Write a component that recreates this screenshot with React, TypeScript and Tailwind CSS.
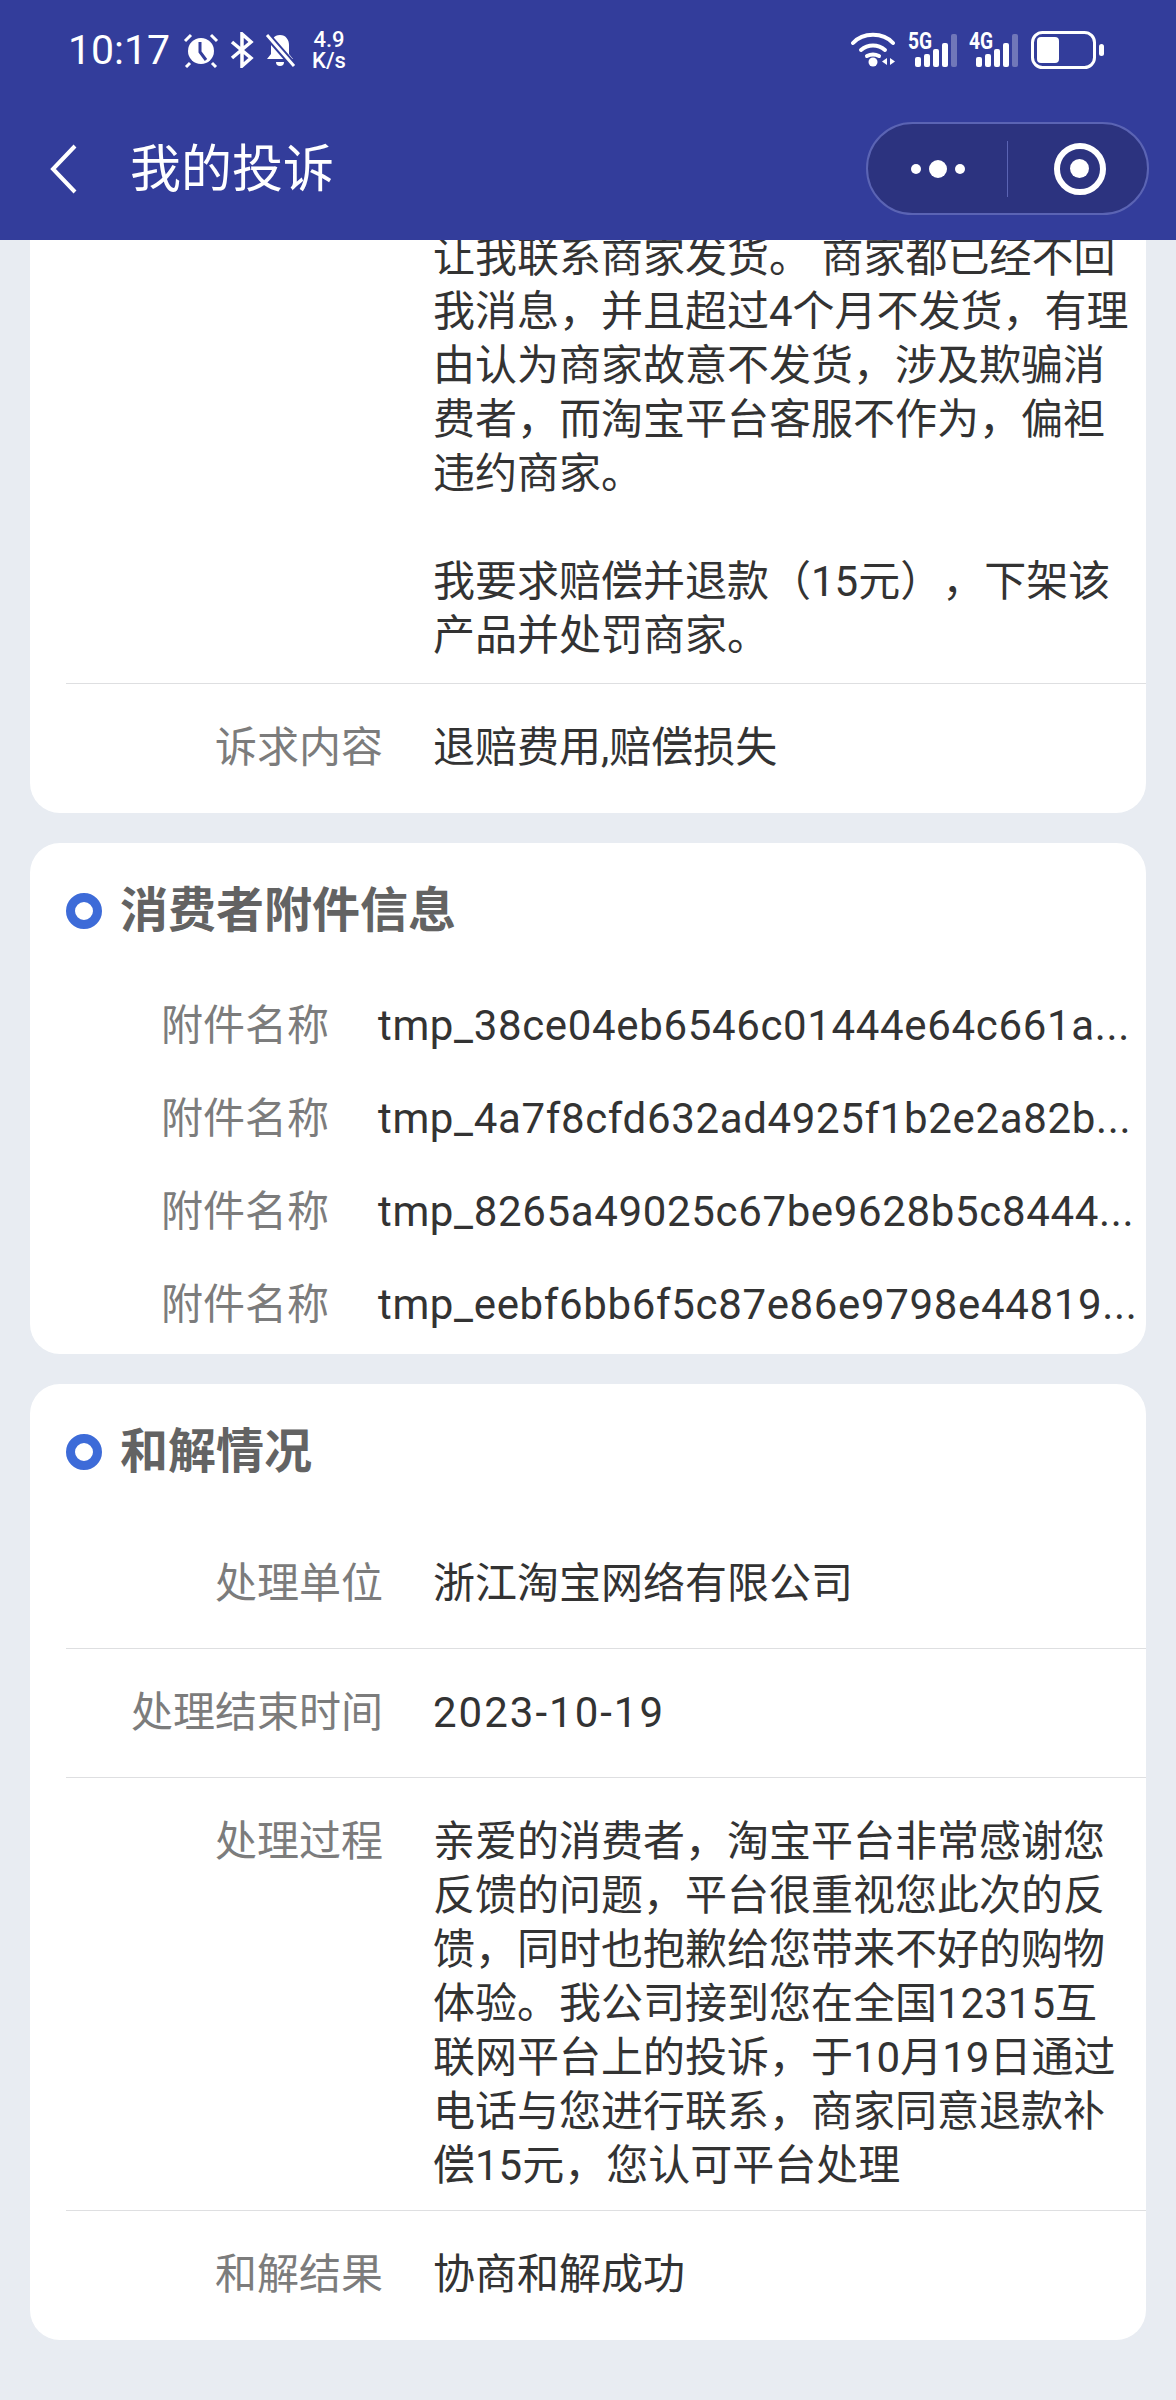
import type { ReactNode } from "react";

const attachments = [
  "tmp_38ce04eb6546c01444e64c661a...",
  "tmp_4a7f8cfd632ad4925f1b2e2a82b...",
  "tmp_8265a49025c67be9628b5c8444...",
  "tmp_eebf6bb6f5c87e86e9798e44819...",
];

function Signal({ label }: { label: string }) {
  return (
    <div className="relative ml-[11px] flex h-[34px] w-[50px] items-end gap-[3px]">
      <span className="absolute left-0 top-[-3px] origin-left scale-x-[0.8] text-[24px] font-bold leading-[22px]">{label}</span>
      <span className="ml-[7px] h-[10px] w-[6px] rounded-[2px] bg-white" />
      <span className="h-[13px] w-[6px] rounded-[2px] bg-white" />
      <span className="h-[18px] w-[6px] rounded-[2px] bg-white" />
      <span className="h-[24px] w-[6px] rounded-[2px] bg-white" />
      <span className="h-[33px] w-[6px] rounded-[2px] bg-white/30" />
    </div>
  );
}

function StatusBar() {
  return (
    <div className="flex h-[80px] items-start justify-between pl-[68px] pr-[71px] pt-[30px] text-white">
      <div className="flex h-[40px] items-center">
        <span className="text-[41px] leading-[40px]">10:17</span>
        <svg className="ml-[13px]" width="36" height="36" viewBox="0 0 36 36">
          <circle cx="18" cy="19" r="13" fill="white" />
          <path d="M17 10v10l6 8" stroke="#333d9b" strokeWidth="3" fill="none" />
          <path d="M2 9 8 3M34 9 28 3M7 31l-4 4M29 31l4 4" stroke="white" strokeWidth="3" />
        </svg>
        <svg className="ml-[11px]" width="24" height="36" viewBox="0 0 24 36" fill="none" stroke="white" strokeWidth="3.5">
          <path d="M2 10 21 26 12 34V2l9 8L2 26" />
        </svg>
        <svg className="ml-[10px]" width="33" height="36" viewBox="0 0 33 36">
          <path d="M16 3c6 0 9 5 9 10v9l4 5H3l4-5v-9c0-5 3-10 9-10Z" fill="white" />
          <path d="M12 30h8a4 4 0 0 1-8 0Z" fill="white" />
          <path d="M2 2l28 32" stroke="#333d9b" strokeWidth="7" />
          <path d="M3 3l27 31" stroke="white" strokeWidth="3" />
        </svg>
        <div className="ml-[15px] flex flex-col items-center text-[22px] font-medium leading-[21px]">
          <span>4.9</span>
          <span>K/s</span>
        </div>
      </div>
      <div className="flex h-[40px] items-center">
        <svg width="46" height="36" viewBox="0 0 46 36" fill="none" stroke="white" strokeWidth="4" strokeLinecap="round">
          <path d="M2 11C12 0 32 0 42 11" />
          <path d="M10 18c7-6 17-6 24 0" />
          <path d="M16 24c4-2 8-2 12 0" />
          <circle cx="22" cy="30" r="4.5" fill="white" stroke="none" />
          <polygon points="36,26 36,33 31,29.5" fill="white" stroke="none" />
          <polygon points="39,26 39,33 44,29.5" fill="white" stroke="none" />
        </svg>
        <Signal label="5G" />
        <Signal label="4G" />
        <svg className="ml-[12px]" width="74" height="38" viewBox="0 0 74 38">
          <rect x="1.5" y="1.5" width="62" height="35" rx="10" fill="none" stroke="white" strokeWidth="3" />
          <rect x="6" y="6" width="22" height="26" rx="4" fill="white" />
          <rect x="68" y="13" width="5" height="12" rx="2.5" fill="white" />
        </svg>
      </div>
    </div>
  );
}

function NavBar() {
  return (
    <div className="flex h-[160px] items-start justify-between pl-[49px] pr-[27px] pt-[42px] text-white">
      <div className="flex h-[93px] items-center">
        <svg width="28" height="50" viewBox="0 0 28 50" fill="none" stroke="white" strokeWidth="4">
          <path d="M26 2 4 25l22 23" />
        </svg>
        <span className="ml-[53px] mt-[2px] text-[51px] leading-[60px]">我的投诉</span>
      </div>
      <div className="flex h-[93px] w-[283px] items-center rounded-full border-2 border-[#5b64b4] bg-[#2c337f]">
        <div className="flex w-[139px] items-center justify-center gap-[8px]">
          <span className="h-[10px] w-[10px] rounded-full bg-white" />
          <span className="h-[18px] w-[18px] rounded-full bg-white" />
          <span className="h-[10px] w-[10px] rounded-full bg-white" />
        </div>
        <div className="h-[56px] w-px bg-[#5b64b4]" />
        <div className="flex flex-1 items-center justify-center pl-[4px]">
          <span className="flex h-[52px] w-[52px] items-center justify-center rounded-full border-[6px] border-white">
            <span className="h-[19px] w-[19px] rounded-full bg-white" />
          </span>
        </div>
      </div>
    </div>
  );
}

function Row({ label, children, border = true }: { label: string; children: ReactNode; border?: boolean }) {
  return (
    <div className={`ml-[36px] flex min-h-[129px] items-start pb-[17px] pt-[37px] ${border ? "border-b border-[#dedfe1]" : ""}`}>
      <div className="w-[317px] shrink-0 text-right text-[#7c7c7c]">{label}</div>
      <div className="ml-[50px] w-[700px] text-[#333333]">{children}</div>
    </div>
  );
}

function SectionTitle({ children }: { children: string }) {
  return (
    <div className="ml-[36px] flex items-center">
      <span className="h-[36px] w-[36px] rounded-full border-[9px] border-[#3d6bd8]" />
      <span className="ml-[18px] text-[48px] font-bold leading-[60px] text-[#636363]">{children}</span>
    </div>
  );
}

export default function App() {
  return (
    <div className="h-[2400px] w-[1176px] overflow-hidden bg-[#e8ecf2] font-['Roboto','Noto_Sans_CJK_SC',sans-serif] text-[42px] leading-[54px] [text-spacing-trim:space-all]">
      <div className="relative z-10 bg-[#333d9b]">
        <StatusBar />
        <NavBar />
      </div>
      <div className="flex flex-col gap-[30px] px-[30px]">
        <div className="rounded-b-[30px] bg-white">
          <div className="ml-[36px] border-b border-[#dedfe1] pb-[20px]">
            <div className="-mt-[9px] ml-[367px] w-[700px] text-[#333333]">
              让我联系商家发货。 商家都已经不回我消息，并且超过4个月不发货，有理由认为商家故意不发货，涉及欺骗消费者，而淘宝平台客服不作为，偏袒违约商家。
              <br />
              <br />
              我要求赔偿并退款（15元），下架该产品并处罚商家。
            </div>
          </div>
          <Row label="诉求内容" border={false}>退赔费用,赔偿损失</Row>
        </div>

        <div className="rounded-[30px] bg-white pb-[22px] pt-[38px]">
          <SectionTitle>消费者附件信息</SectionTitle>
          <div className="mt-[58px] flex flex-col gap-[39px]">
            {attachments.map((name) => (
              <div key={name} className="flex items-start">
                <div className="ml-[36px] w-[263px] shrink-0 text-right text-[#7c7c7c]">附件名称</div>
                <div className="ml-[49px] whitespace-nowrap tracking-[0.65px] text-[#333333]">{name}</div>
              </div>
            ))}
          </div>
        </div>

        <div className="rounded-[30px] bg-white pt-[38px]">
          <SectionTitle>和解情况</SectionTitle>
          <div className="mt-[38px]">
            <Row label="处理单位">浙江淘宝网络有限公司</Row>
            <Row label="处理结束时间"><span className="tracking-[2px]">2023-10-19</span></Row>
            <Row label="处理过程">亲爱的消费者，淘宝平台非常感谢您反馈的问题，平台很重视您此次的反馈，同时也抱歉给您带来不好的购物体验。我公司接到您在全国12315互联网平台上的投诉，于10月19日通过电话与您进行联系，商家同意退款补偿15元，您认可平台处理</Row>
            <Row label="和解结果" border={false}>协商和解成功</Row>
          </div>
        </div>
      </div>
    </div>
  );
}
